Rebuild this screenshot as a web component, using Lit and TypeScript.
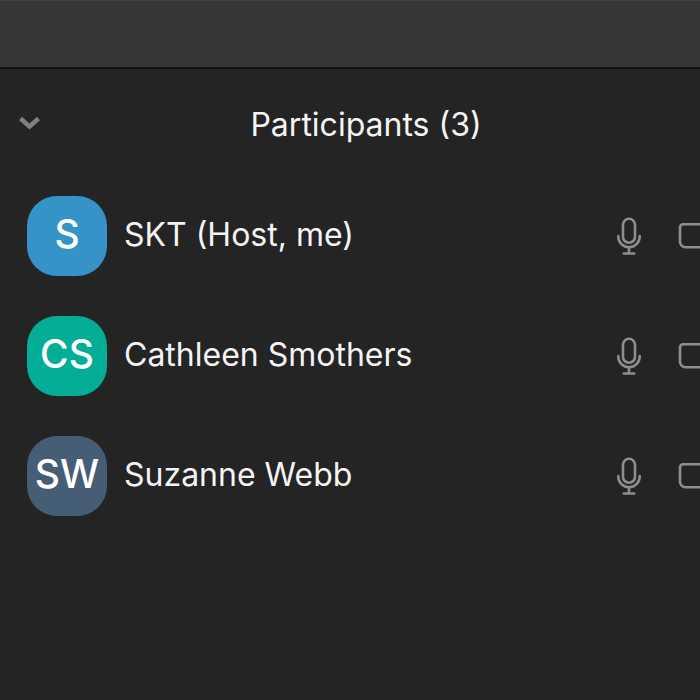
import { LitElement, html, css } from "lit";
import { customElement, property } from "lit/decorators.js";

@customElement("participant-row")
class ParticipantRow extends LitElement {
  @property() name = "";
  @property() initials = "";
  @property() color = "";

  static styles = css`
    :host {
      display: flex;
      align-items: center;
      height: 80px;
    }
    .avatar {
      flex: none;
      box-sizing: border-box;
      width: 80px;
      height: 80px;
      padding-bottom: 5px;
      border-radius: 30px;
      display: flex;
      align-items: center;
      justify-content: center;
      color: #fff;
      font-size: 39px;
      font-weight: 500;
      line-height: 48px;
    }
    .name {
      flex: 1;
      margin-left: 17px;
      padding-bottom: 2px;
      font-size: 32px;
      line-height: 40px;
      color: #f4f4f4;
      white-space: nowrap;
    }
    .icon {
      flex: none;
      display: block;
      padding: 0;
      border: 0;
      background: none;
      color: #8e8e8e;
    }
    .camera {
      margin-left: 36px;
    }
    svg {
      display: block;
      fill: none;
      stroke: currentColor;
      stroke-width: 2.6;
      stroke-linecap: round;
      stroke-linejoin: round;
    }
  `;

  render() {
    return html`
      <div class="avatar" style="background:${this.color}">${this.initials}</div>
      <div class="name">${this.name}</div>
      <button class="icon" aria-label="Mute ${this.name}">
        <svg width="26" height="40" viewBox="0 0 26 40">
          <rect x="7" y="2.8" width="12" height="24" rx="6" />
          <path d="M2.3 20v.6a10.7 10.7 0 0 0 21.4 0V20M13 31.5v6M7.8 37.5h10.4" />
        </svg>
      </button>
      <button class="icon camera" aria-label="Video of ${this.name}">
        <svg width="40" height="40" viewBox="0 0 40 40">
          <path d="M5 8.3h19a4 4 0 0 1 4 4v15a4 4 0 0 1-4 4H7.5a5.5 5.5 0 0 1-5.5-5.5V11.3a3 3 0 0 1 3-3zM28 17l9-5v16l-9-5" />
        </svg>
      </button>
    `;
  }
}

@customElement("app-root")
class AppRoot extends LitElement {
  static styles = css`
    :host {
      display: block;
      min-height: 100vh;
      overflow: hidden;
      background: #242424;
      font-family: Inter, "Liberation Sans", sans-serif;
    }
    .titlebar {
      height: 66px;
      border-top: 1px solid #434144;
      border-bottom: 2px solid #121012;
      background: #393639;
    }
    .panel {
      width: calc(100% + 32px);
    }
    .header {
      display: grid;
      grid-template-columns: 60px 1fr 60px;
      align-items: center;
      height: 112px;
    }
    .title {
      margin: 0;
      text-align: center;
      font-size: 32px;
      line-height: 40px;
      font-weight: 400;
      color: #f4f4f4;
    }
    .collapse {
      justify-self: center;
      padding: 0;
      border: 0;
      background: none;
      color: #808080;
    }
    .chevron {
      display: block;
      fill: none;
      stroke: currentColor;
      stroke-width: 4.4;
    }
    .list {
      display: flex;
      flex-direction: column;
      gap: 40px;
      margin: 0;
      padding: 15px 14px 27px 27px;
      list-style: none;
    }
  `;

  private people = [
    { name: "SKT (Host, me)", initials: "S", color: "#3593c7" },
    { name: "Cathleen Smothers", initials: "CS", color: "#04ae96" },
    { name: "Suzanne Webb", initials: "SW", color: "#455d75" },
  ];

  render() {
    return html`
      <div class="titlebar"></div>
      <main class="panel">
        <header class="header">
          <button class="collapse" aria-label="Collapse participants">
            <svg class="chevron" width="22" height="20" viewBox="0 0 22 20">
              <path d="M1.5 3.5l9 8L19.500 3.500" />
            </svg>
          </button>
          <h1 class="title">Participants (${this.people.length})</h1>
        </header>
        <ul class="list">
          ${this.people.map(
            (p) => html`<li>
              <participant-row .name=${p.name} .initials=${p.initials} .color=${p.color}></participant-row>
            </li>`
          )}
        </ul>
      </main>
    `;
  }
}
